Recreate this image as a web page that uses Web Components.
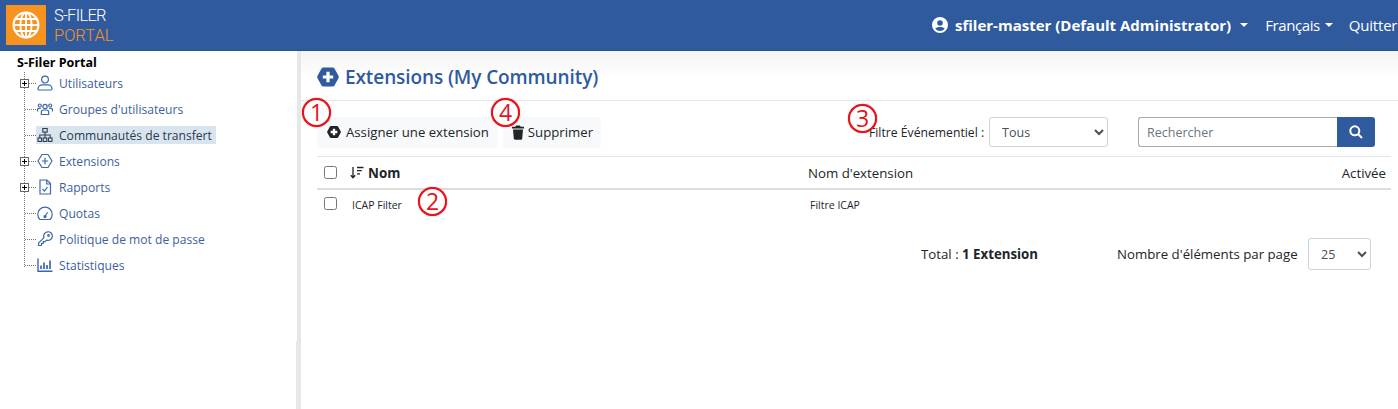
<!DOCTYPE html>
<html lang="fr"><head><meta charset="utf-8"><title>S-Filer Portal</title>
<style>
html,body{margin:0;height:100%;background:#fff;overflow:hidden}
body{font-family:"Open Sans","Noto Sans",sans-serif;color:#212529}
</style></head><body>
<sf-app>
  <sf-header slot="header"></sf-header>
  <sf-tree slot="side">
    <sf-node expander label="Utilisateurs" icon="user"></sf-node>
    <sf-node label="Groupes d'utilisateurs" icon="users"></sf-node>
    <sf-node selected label="Communautés de transfert" icon="sitemap"></sf-node>
    <sf-node expander label="Extensions" icon="plus"></sf-node>
    <sf-node expander label="Rapports" icon="report"></sf-node>
    <sf-node label="Quotas" icon="gauge"></sf-node>
    <sf-node label="Politique de mot de passe" icon="key"></sf-node>
    <sf-node label="Statistiques" icon="chart"></sf-node>
  </sf-tree>
  <sf-main slot="main"></sf-main>
</sf-app>
<script>
const def=(n,html)=>{const t=document.createElement('template');t.innerHTML=html;customElements.define(n,class extends HTMLElement{constructor(){super();this.attachShadow({mode:'open'}).appendChild(t.content.cloneNode(true))}})};

def('sf-app',`<style>
:host{display:grid;grid-template-columns:297px 4px 1fr;grid-template-rows:51px 358px;height:409px;width:1398px;overflow:hidden}
.h{grid-column:1/4}
.split{background:#e7e7e7;position:relative}
.split::after{content:"";position:absolute;left:-1px;top:290px;bottom:0;width:1px;background:#e7e7e7}
.s,.m{overflow:hidden;min-width:0}
</style><div class="h"><slot name="header"></slot></div><div class="s"><slot name="side"></slot></div><div class="split"></div><div class="m"><slot name="main"></slot></div>`);

def('sf-header',`<style>
:host{display:flex;align-items:center;height:51px;background:#2f5a9e;color:#fff;box-sizing:border-box;border-bottom:1px solid #2a528f;overflow:hidden}
.logo{width:40px;height:40px;background:#f7931e;margin-left:6px;display:flex;align-items:center;justify-content:center;flex:none}
.brand{margin-left:8px;font:300 16.5px/19.5px Roboto,sans-serif;letter-spacing:-.7px;display:flex;flex-direction:column;margin-top:1px}
.brand span{height:19.5px;display:block}
.brand span:last-child{color:#f7941e;letter-spacing:0}
nav{margin-left:auto;display:flex;align-items:center;font-size:15px;white-space:nowrap;letter-spacing:-.4px;flex:none;width:466px;box-sizing:border-box}
.user{font-weight:700;display:flex;align-items:center;letter-spacing:0}
.user svg{margin-right:7px}
.caret{display:inline-block;border:4px solid transparent;border-top-color:#fff;border-bottom:0;margin-left:9px}
.lang{margin-left:17px;display:flex;align-items:center}
.lang .caret{margin-left:5px}
.q{margin-left:16px;letter-spacing:-.2px}
</style>
<div class="logo"><svg width="28" height="28" viewBox="0 0 28 28" fill="none" stroke="#fff" stroke-width="1.9"><circle cx="14" cy="14" r="12.4" stroke-width="2.2"/><ellipse cx="14" cy="14" rx="5.6" ry="12.4"/><path d="M14 1.500v25M1.500 14h25M3.200 8h21.600M3.200 20h21.600"/></svg></div>
<div class="brand"><span>S-FILER</span><span>PORTAL</span></div>
<nav><span class="user"><svg width="16" height="16" viewBox="0 0 16 16"><path fill="#fff" fill-rule="evenodd" d="M8 0a8 8 0 1 1 0 16A8 8 0 0 1 8 0zm0 3.200a2.800 2.800 0 1 0 0 5.600 2.800 2.800 0 0 0 0-5.600zM8 14a6 6 0 0 0 4.700-2.300C12 10.500 10.200 10 8 10s-4 .5-4.700 1.700A6 6 0 0 0 8 14z"/></svg>sfiler-master (Default Administrator)<i class="caret"></i></span>
<span class="lang">Français<i class="caret"></i></span><span class="q">Quitter</span></nav>`);

def('sf-tree',`<style>
:host{display:block;height:358px;background:#fff}
.root{font-weight:700;color:#000;font-size:12.5px;padding:4px 0 0 17px;line-height:16px;height:15px}
.list{position:relative;margin-top:0}
.list::before{content:"";position:absolute;left:24px;top:2px;height:195px;border-left:1px dotted #777}
</style><div class="root">S-Filer Portal</div><div class="list"><slot></slot></div>`);

const icons={
user:'<circle cx="8" cy="4.600" r="3.400"/><path d="M2 15c-.8 0-1-.5-1-1.200C1 11.500 3 9.800 5 9.800h6c2 0 4 1.700 4 4 0 .7-.2 1.200-1 1.200z"/>',
users:'<circle cx="8" cy="5.500" r="2.200"/><circle cx="2.800" cy="4.500" r="1.500"/><circle cx="13.200" cy="4.500" r="1.500"/><path d="M4.300 13.500v-2.300c0-1.300 1-2.200 2.200-2.200h3c1.200 0 2.200.9 2.200 2.200v2.300zM.5 10.500V9c0-1 .7-1.700 1.700-1.700h1.600M15.500 10.500V9c0-1-.7-1.700-1.700-1.700h-1.600"/>',
sitemap:'<g stroke="#2d3e50" fill="none" stroke-width="1.100"><rect x="5.800" y="1.500" width="4.400" height="3.600"/><rect x="1" y="11" width="3.600" height="3.400"/><rect x="6.200" y="11" width="3.600" height="3.400"/><rect x="11.400" y="11" width="3.600" height="3.400"/><path d="M8 5v6M2.800 11V8h10.400v3"/></g>',
plus:'<path d="M5 1.500h6L15 8l-4 6.500H5L1 8z" stroke-linejoin="round"/><path d="M8 4.800v6.400M4.800 8h6.400"/>',
report:'<path d="M3 1h7l3.500 3.500V15H3zM9.700 1v4h3.800"/><path d="M5.500 10l2 2 3-4"/>',
gauge:'<path d="M3 14.500h10a7.200 7.200 0 1 0-10 0z"/><path d="M8 11.500l2.600-4.200"/><circle cx="8" cy="11.600" r="1" fill="#2f5a9e"/>',
key:'<path d="M1.500 14.500l.2-2.600 5.300-5.300a4.300 4.300 0 1 1 2.500 2.500L8 10.600H6.300v1.700H4.600V14l-.5.500z" stroke-linejoin="round"/><circle cx="11.500" cy="4.500" r=".8"/>',
chart:'<path stroke-width="1.400" d="M1 1.500v12.700h14.500"/><path stroke-width="1.700" d="M4 12V8.500M7 12V5.500M10 12V8M13 12V3.500"/>'
};
customElements.define('sf-node',class extends HTMLElement{
 constructor(){super();this.attachShadow({mode:'open'})}
 connectedCallback(){
  const sel=this.hasAttribute('selected'),exp=this.hasAttribute('expander');
  this.shadowRoot.innerHTML=`<style>
  :host{display:flex;align-items:center;height:26px;position:relative;font-size:12.1px;color:${sel?'#2b3a4e':'#3d5f9f'}}
  .dots{position:absolute;left:25px;top:13px;width:11px;border-top:1px dotted #777}
  .box{position:absolute;left:20px;top:9px;width:7px;height:7px;border:1px solid #666;background:#fff}
  .box::before{content:"";position:absolute;left:1px;right:1px;top:3px;height:1px;background:#000}
  .box::after{content:"";position:absolute;top:1px;bottom:1px;left:3px;width:1px;background:#000}
  .item{margin-left:36px;display:flex;align-items:center;height:18px;padding:0 4px 0 1px;background:${sel?'#d9e5ee':'none'};gap:6px;white-space:nowrap}
  svg{flex:none;width:16px;height:16px}
  </style><span class="dots"></span>${exp?'<span class="box"></span>':''}<span class="item"><svg viewBox="0 0 16 16" fill="none" stroke="${sel?'#2d3e50':'#3d68ab'}" stroke-width="1.200">${icons[this.getAttribute('icon')]}</svg><span>${this.getAttribute('label')}</span></span>`;
 }
});

def('sf-mark',`<style>
:host{position:absolute;width:29px;height:29px;box-sizing:border-box;border:2.500px solid #e6141a;border-radius:50%;background:#fff;color:#e6141a;display:flex;align-items:center;justify-content:center;font:400 23px/1 "Open Sans",sans-serif;box-shadow:0 0 1px #e8161c;z-index:2}
</style><slot></slot>`);

def('sf-btn',`<style>
:host{display:inline-flex;align-items:center;height:31px;background:#f8f9fa;border-radius:3px;font-size:13.2px;color:#212529;padding:0 8px 0 9px;gap:5px;white-space:nowrap;box-sizing:border-box}
</style><slot name="i"></slot><slot></slot>`);

def('sf-main',`<style>
:host{display:block;height:358px;font-size:13.25px;color:#212529;position:relative;background:#fff}
.title{height:50px;box-sizing:border-box;background:linear-gradient(#f5f5f5,#fff 60%);border-bottom:1px solid #e7e7e7;display:flex;align-items:center;gap:6px;padding:2px 0 0 16px;color:#2f5a9e;font-size:19px;font-weight:600;letter-spacing:-.1px}
.content{margin-left:16px;width:1074px}
.bar{height:56px;box-sizing:border-box;border-bottom:1px solid #e5e5e5;display:flex;align-items:center;position:relative;padding-top:7px}
.bar .btns{display:flex;gap:5px}
.filter{position:absolute;left:552px;top:16px;display:flex;align-items:center;height:30px;gap:5px;white-space:nowrap;font-size:12.2px}
select{font:12.5px "Open Sans",sans-serif;color:#495057;background:#fff;border:1px solid #ced4da;border-radius:3px;height:30px;box-sizing:border-box;padding:0 0 0 8px}
.search{position:absolute;left:821px;top:16px;display:flex;height:30px}
.q{width:199px;height:30px;box-sizing:border-box;border:1px solid #aaa;border-right:0;border-radius:3px 0 0 3px;padding:0 8px;font:12.5px "Open Sans",sans-serif;color:#495057;outline:0}
.q::placeholder{color:#6c757d;opacity:1}
.go{width:38px;height:30px;background:#2f5a9e;border-radius:0 3px 3px 0;display:flex;align-items:center;justify-content:center}
.row{display:grid;grid-template-columns:33px 458px 1fr auto;align-items:center}
.head{height:31px;border-bottom:2px solid #dcdcdc}
.head .nom{font-weight:700;display:flex;align-items:center;gap:4px;font-size:13.4px}
.body{height:29px;font-size:10.5px}
.body .c2,.body .c3{padding-left:2px}
.head .end{padding-right:5px}
.cb{appearance:none;display:block;width:13px;height:13px;box-sizing:border-box;border:1px solid #767676;border-radius:2.500px;margin:0 0 0 7px;background:#fff}
.foot{position:relative;display:flex;align-items:center;height:34px;margin-top:18px}
.total{position:absolute;left:604px}
.per{position:absolute;left:800px;white-space:nowrap}
.foot select{position:absolute;left:991px;width:63px;height:32px;top:1px}
</style>
<div class="title"><svg width="22" height="20" viewBox="0 0 22 20"><path fill="#2f5a9e" d="M6 .5h10c.6 0 1 .3 1.300.8l4.200 7.500c.4.700.4 1.600 0 2.400l-4.200 7.500c-.3.500-.7.800-1.300.8H6c-.6 0-1-.3-1.300-.8L.5 11.200c-.4-.8-.4-1.700 0-2.400l4.200-7.500C5 .8 5.400.5 6 .5z"/><path fill="none" stroke="#fff" stroke-width="3.200" d="M11 4.800v10.400M5.800 10h10.400"/></svg><span>Extensions (My Community)</span></div>
<div class="content">
 <div class="bar"><div class="btns">
  <sf-btn style="padding-left:10px;padding-right:9px"><svg slot="i" width="14" height="14" viewBox="0 0 22 20"><path fill="#212529" d="M6 .5h10c.6 0 1 .3 1.300.8l4.200 7.500c.4.700.4 1.600 0 2.400l-4.200 7.500c-.3.500-.7.800-1.300.8H6c-.6 0-1-.3-1.300-.8L.5 11.200c-.4-.8-.4-1.700 0-2.400l4.200-7.500C5 .8 5.400.5 6 .5z"/><path fill="none" stroke="#fff" stroke-width="3.600" d="M11 4.800v10.400M5.800 10h10.400"/></svg>Assigner une extension</sf-btn>
  <sf-btn style="padding-left:8px;gap:3px"><svg slot="i" width="14" height="15" viewBox="0 0 14 15" fill="#212529"><path d="M5 .5h4l.7 1.300H13v1.700H1V1.800h3.300zM2 4.500h10l-.8 9.300c0 .5-.5.900-1 .9H3.800c-.5 0-1-.4-1-.9z"/></svg>Supprimer</sf-btn>
 </div>
 <div class="filter"><span>Filtre Événementiel :</span><select style="width:119px"><option>Tous</option></select></div>
 <div class="search"><input class="q" placeholder="Rechercher"><span class="go"><svg width="14" height="14" viewBox="0 0 14 14" fill="none" stroke="#fff" stroke-width="2"><circle cx="5.800" cy="5.800" r="4.500"/><path d="M9 9l4 4"/></svg></span></div>
 </div>
 <div class="row head"><span><input type="checkbox" class="cb"></span><span class="nom"><svg width="14" height="13" viewBox="0 0 14 13" fill="none" stroke="#212529" stroke-width="1.300"><path d="M3 1v10.500M.8 9.300 3 11.700l2.200-2.400M7 1.500h6.500M7 4.700h4.800M7 7.900h3"/></svg>Nom</span><span>Nom d'extension</span><span class="end">Activée</span></div>
 <div class="row body"><span><input type="checkbox" class="cb" style="margin-top:-2px"></span><span class="c2">ICAP Filter</span><span class="c3">Filtre ICAP</span><span></span></div>
 <div class="foot"><span class="total">Total : <b>1 Extension</b></span><span class="per">Nombre d'éléments par page</span><select><option>25</option></select></div>
</div>
<sf-mark style="left:1px;top:47px">1</sf-mark>
<sf-mark style="left:117px;top:136px">2</sf-mark>
<sf-mark style="left:547px;top:53px">3</sf-mark>
<sf-mark style="left:190px;top:47px">4</sf-mark>
`);
</script></body></html>
